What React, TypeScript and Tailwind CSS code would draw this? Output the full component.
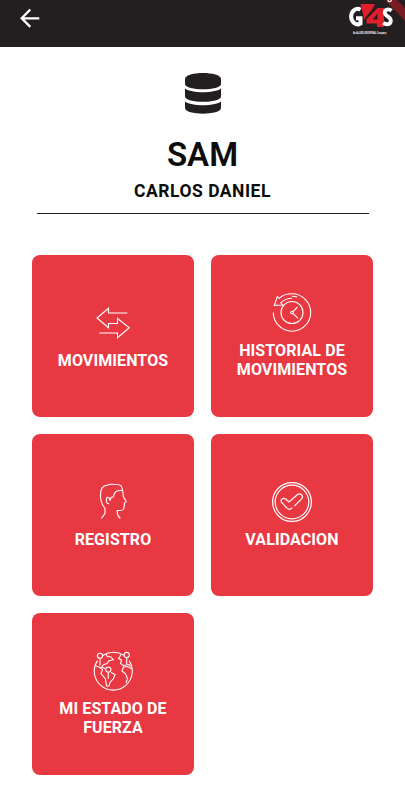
import React from "react";

const ArrowsIcon = () => (
  <svg className="w-10 h-10" viewBox="0 0 40 40" fill="none" stroke="currentColor" strokeWidth="1.1">
    <path d="M34.3 10H15.5V5.3L4 15l11.5 9.7v-4.2h9v-5l11.8 9.2-11.8 10V30H6.3" />
  </svg>
);

const HistoryIcon = () => (
  <svg className="w-10 h-10" viewBox="0 0 40 40" fill="none" stroke="currentColor" strokeWidth="1.1">
    <path d="M1.3 19.5A18.7 18.7 0 1 0 20 .8c-5.5 0-9.5 1.5-12.8 4.5L5.3 3.5 2.3 12.3l8.3-.3-1.9-2.2c3-3 6.3-4.6 11.3-4.6" />
    <path d="M20 3.2c2 0 3.6.3 5 .8" />
    <circle cx="20" cy="19.5" r="11" />
    <circle cx="20" cy="19.5" r="1.3" />
    <path d="M21 18.6l4.5-4.6M21 20.4l5 5" />
  </svg>
);

const PersonIcon = () => (
  <svg className="w-10 h-10" viewBox="0 0 40 40" fill="none" stroke="currentColor" strokeWidth="1.1">
    <path d="M8.3 36.5L12 31.5V26.3C9.500 23.500 7.700 19 7.500 14 7.300 7.500 9.500 3.500 14 3.200c1.500-.7 3-.9 5-.9 4 0 7.500.2 9 1.500C29.800 6 30 10 30.300 14.500l3 5c-.2 1-1.300 1.200-2 1.500l.2 1.800-.5 1.200v1.800c-.4 2.400-1.800 3-6.700 2.700-.5 3 .3 5.500 3 8" />
    <path d="M29.5 8.3c-3 0-5.5.3-7 1.7-1.5 1.5-1.5 3.7-2.5 5l-2 .5-.5 2.500h-1c0-3.500-3.200-3.500-3.200-.5 0 2.500.8 4.200 2.700 4.200" />
  </svg>
);

const CheckIcon = () => (
  <svg className="w-10 h-10" viewBox="0 0 40 40" fill="none" stroke="currentColor" strokeWidth="1.2">
    <circle cx="20" cy="20" r="19.4" />
    <circle cx="20" cy="20" r="16.8" />
    <path d="M22.3 24.2l7.300-7.300c2.600-3-1.600-6.600-4.300-4.100l-8.300 7.200-3-2.800c-3-2.300-6.500 1-4 3.700l5.300 5.500c1.600 1.300 2.900 1.300 4.300 0l.7-.7" />
  </svg>
);

const WorldIcon = () => (
  <svg className="w-10 h-10" viewBox="0 0 40 40" fill="none" stroke="currentColor" strokeWidth="1.1">
    <path d="M9.8 4.5C13 2.4 16.5 1.3 20.3 1.3c3.8 0 7.4 1 10.5 2.9M36 9.5A19 19 0 1 1 4.500 9.500" />
    <circle cx="7" cy="4.8" r="2.6" />
    <circle cx="33.7" cy="4" r="2.6" />
    <circle cx="15.3" cy="18.6" r="2.6" />
    <path d="M7 7.5v7M33.7 6.7v6.5M15.3 21.3v6.5" />
    <path d="M13 3l1.5 2.7h3.2l2.5 3-4.2 1-2 2.800-3.500 1.200-2 2.300 3.500 1.500M2 14.500l5 2 2.500 2.200-1.500 4 4.500 5.300 1 7h2.500l1-3.500 3.500-4 1.500-4-4-2" />
    <path d="M28 3.5l-2.5 4 3 1.500-1 3.500 2.500 2 6-1 1.500 2M39 18l-4.500-2.500-4 .5-1.500 4 3.500 2.800 2 5-1.500 4.200" />
  </svg>
);

const Logo = () => (
  <svg className="w-[46px] h-[34px] overflow-visible" viewBox="346 4 46 34">
    <path d="M360.5 9.7A6.5 7.7 0 1 0 360.5 23.5V18.3H356" fill="none" stroke="#fff" strokeWidth="4" />
    <path d="M360.5 4h14.500l-2.500 5-6.500 8-2 3-.5-4z" fill="#e01f2d" />
    <path d="M384 8v19h-7v-3.500h-10.500v-4.300L377.500 8zM377.500 13.500l-4.800 6h4.800z" fill="#e01f2d" fillRule="evenodd" />
    <path d="M391.5 10.7c-2.5-2-6.7-1.7-6.7 1.7 0 4.3 6 3.6 6 8.3 0 4-4.5 4.5-7.5 2" fill="none" stroke="#fff" strokeWidth="3.8" />
    <text transform="translate(353 34.3) scale(0.63 1)" fill="#fff" fontFamily="Liberation Sans" fontSize="3.3" fontWeight="bold">
      An ALLIED UNIVERSAL Company
    </text>
  </svg>
);

const menuItems = [
  { label: "MOVIMIENTOS", icon: <ArrowsIcon /> },
  { label: "HISTORIAL DE MOVIMIENTOS", icon: <HistoryIcon /> },
  { label: "REGISTRO", icon: <PersonIcon /> },
  { label: "VALIDACION", icon: <CheckIcon /> },
  { label: "MI ESTADO DE FUERZA", icon: <WorldIcon /> },
];

const App: React.FC = () => {
  return (
    <div className="relative w-[405px] h-[800px] overflow-hidden bg-white font-['Roboto',sans-serif] text-[#231f20]">
      <header className="flex justify-between h-[47px] pl-[20px] pr-[13px] pt-1 bg-[#231f20]">
        <button type="button" aria-label="Volver" className="h-[28px] text-white">
          <svg className="w-5 h-5" viewBox="0 0 20 20" fill="none" stroke="currentColor" strokeWidth="2.3">
            <path d="M10.3 1.5L1.7 10.3l8.6 8.6M1.7 10.3H19.3" />
          </svg>
        </button>
        <Logo />
      </header>

      <div className="flex flex-col items-center">
        <svg className="mt-[26px] w-[36px] h-[41px]" viewBox="0 0 36 41" fill="currentColor">
          <path d="M0 6C0-2 36-2 36 6v5C36 18 0 18 0 11z" />
          <path d="M0 15.5c7 5 29 5 36 0v8c0 7-36 7-36 0z" />
          <path d="M0 28.5c7 5 29 5 36 0V35c0 7.5-36 7.5-36 0z" />
        </svg>
        <h1 className="mt-[22px] text-[33px] leading-[38px] font-semibold text-[#0c0c0c]">SAM</h1>
        <h2 className="mt-[7px] text-[17.5px] leading-[20px] font-bold tracking-[0.5px] text-[#0c0c0c]">CARLOS DANIEL</h2>
        <div className="mt-[12px] w-[332px] h-px bg-[#231f20]" />
      </div>

      <div className="grid grid-cols-[162px_162px] gap-[17px] mt-[41px] ml-[32px]">
        {menuItems.map((item) => (
          <button
            key={item.label}
            type="button"
            className="flex flex-col items-center justify-center gap-2 h-[162px] px-5 rounded-[8px] bg-[#e83842] text-white"
          >
            {item.icon}
            <span className="text-[16px] leading-[19px] font-bold tracking-[0.1px]">{item.label}</span>
          </button>
        ))}
      </div>

      {/* debug ribbon */}
      <svg className="absolute top-0 right-0 w-[29px] h-[28px]" viewBox="0 0 29 28">
        <path d="M9 0h12l8 8v13z" fill="#7a1a22" />
        <path d="M12 0c0 2 3 2.5 3.5 0" fill="none" stroke="#fff" strokeWidth="1.2" />
      </svg>
    </div>
  );
};

export default App;
